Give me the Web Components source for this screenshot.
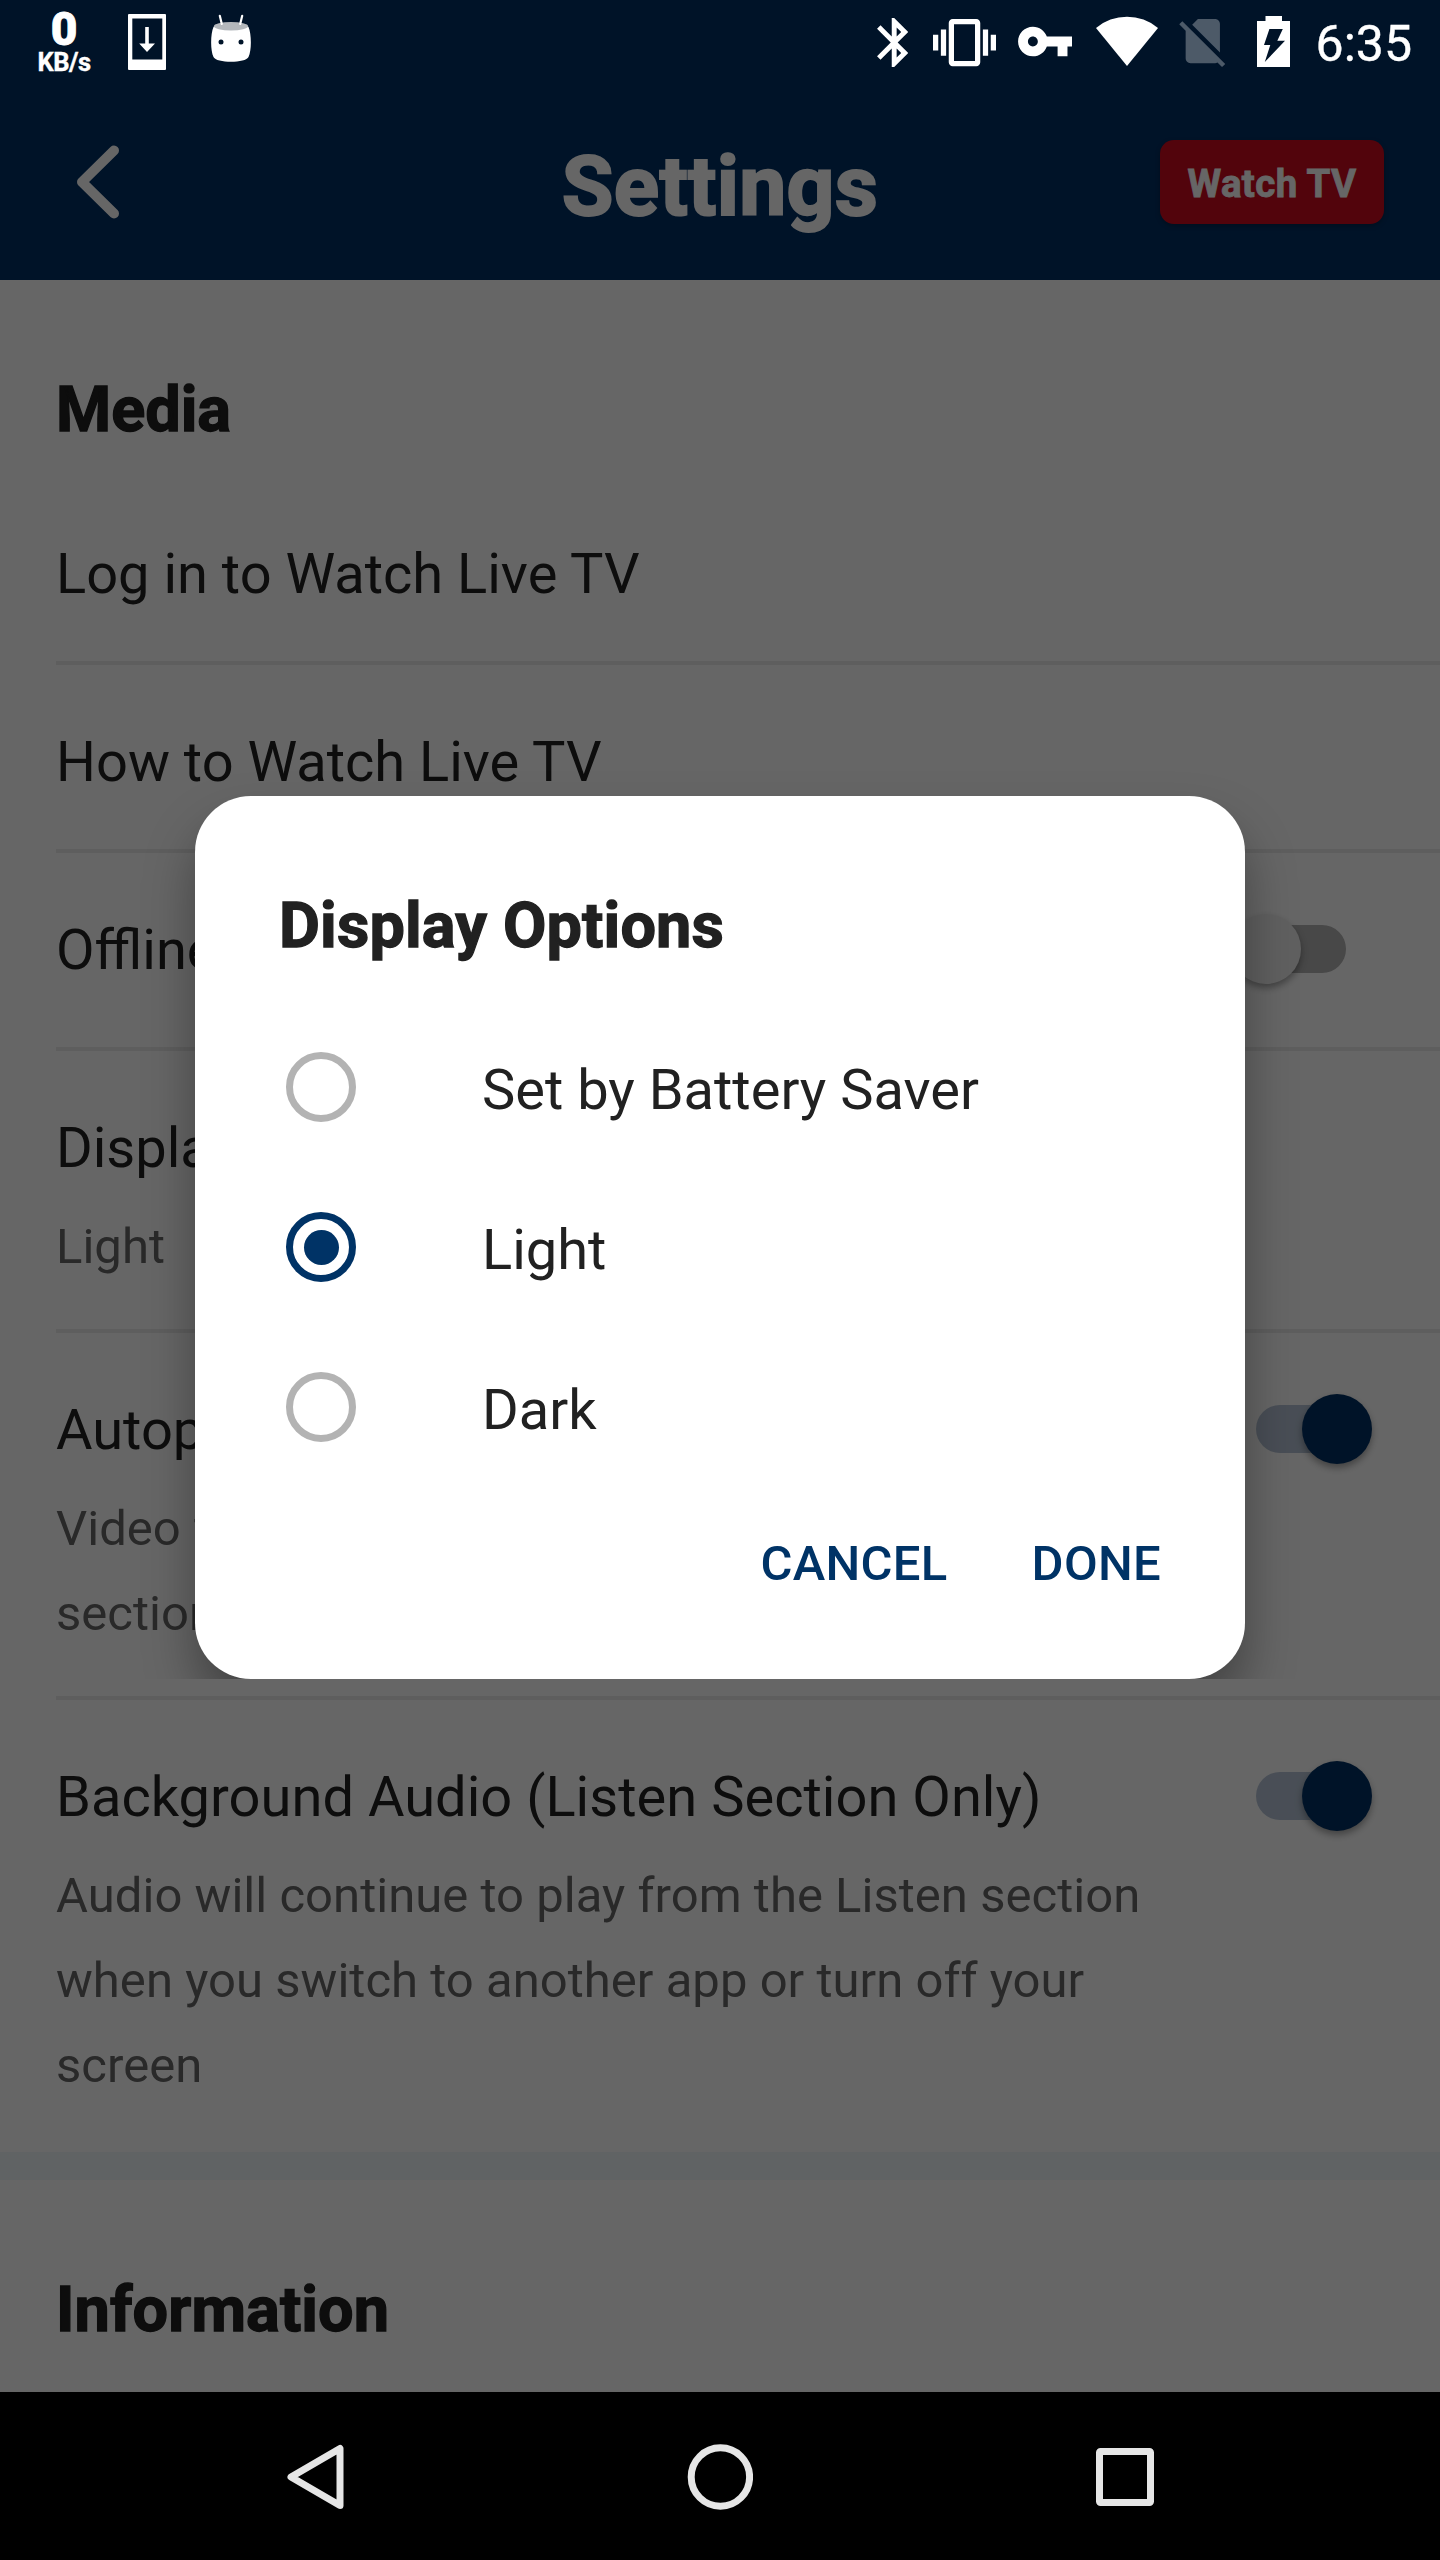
<!DOCTYPE html>
<html lang="en">
<head>
<meta charset="utf-8">
<title>Settings</title>
<style>
  html, body { margin: 0; padding: 0; background: #000; }
  body { width: 1440px; height: 2560px; overflow: hidden; font-family: Roboto, "Noto Sans", sans-serif; }
</style>
</head>
<body>
<phone-screen>
  <app-header slot="app" heading="Settings" action="Watch TV"></app-header>
  <settings-section slot="app" heading="Media">
    <settings-row label="Log in to Watch Live TV"></settings-row>
    <settings-row label="How to Watch Live TV"></settings-row>
    <settings-row label="Offline" class="tall"><toggle-switch slot="control"></toggle-switch></settings-row>
    <settings-row label="Display Options">Light</settings-row>
    <settings-row label="Autoplay">Video from<br>section<toggle-switch slot="control" checked></toggle-switch></settings-row>
    <settings-row label="Background Audio (Listen Section Only)" class="last">Audio will continue to play from the Listen section when you switch to another app or turn off your screen<toggle-switch slot="control" checked></toggle-switch></settings-row>
  </settings-section>
  <settings-section slot="app" heading="Information" class="next"></settings-section>
  <option-dialog slot="dialog" heading="Display Options">
    <radio-option>Set by Battery Saver</radio-option>
    <radio-option checked>Light</radio-option>
    <radio-option>Dark</radio-option>
    <text-button slot="actions">CANCEL</text-button>
    <text-button slot="actions">DONE</text-button>
  </option-dialog>
  <status-bar slot="status"></status-bar>
  <nav-bar slot="nav"></nav-bar>
</phone-screen>

<script>
const define = (name, render) => customElements.define(name, class extends HTMLElement {
  constructor() {
    super();
    this.attachShadow({ mode: 'open' });
  }
  connectedCallback() {
    this.shadowRoot.innerHTML = render(this);
  }
});

define('phone-screen', () => `
  <style>
    :host { display: flex; flex-direction: column; position: relative; width: 1440px; height: 2560px; overflow: hidden; background: #000; }
    .app { flex: 1; min-height: 0; overflow: hidden; background: #fff; }
    .scrim { position: absolute; top: 0; left: 0; right: 0; height: 2392px; box-sizing: border-box; padding-top: 83px;
      background: rgba(0,0,0,.6); display: flex; align-items: center; justify-content: center; }
    .status { position: absolute; top: 0; left: 0; right: 0; }
  </style>
  <div class="app"><slot name="app"></slot></div>
  <slot name="nav"></slot>
  <div class="scrim"><slot name="dialog"></slot></div>
  <div class="status"><slot name="status"></slot></div>`);

define('status-bar', () => `
  <style>
    :host { display: flex; height: 84px; color: #fff; }
    svg { display: block; height: 84px; flex: none; fill: #fff; }
    .left, .right { display: flex; }
    .left { padding-left: 34px; }
    .right { margin-left: auto; padding-right: 28px; }
    .rate { width: 60px; padding-top: 10px; display: flex; flex-direction: column; align-items: center; font-weight: 700; }
    .rate b { font-size: 46px; line-height: 39px; -webkit-text-stroke: .8px #fff; }
    .rate span { font-size: 25.500px; line-height: 26px; letter-spacing: -.5px; -webkit-text-stroke: .4px #fff; }
    time { font-size: 50px; line-height: 56px; padding-top: 15.500px; margin-left: 25.500px; -webkit-text-stroke: .4px #fff; }
  </style>
  <div class="left">
    <div class="rate"><b>0</b><span>KB/s</span></div>
    <svg style="margin-left:34px" width="38" viewBox="128 0 38 84">
      <path fill-rule="evenodd" d="M129 14h36a1 1 0 0 1 1 1v54a1 1 0 0 1-1 1h-36a1 1 0 0 1-1-1V15a1 1 0 0 1 1-1zM132.300 18.500v41h30v-41z"/>
      <path d="M145.200 27h3.600v16.500h6.200L147 52l-7.800-8.500h6z"/>
    </svg>
    <svg style="margin-left:45px" width="40" viewBox="211 0 40 84">
      <path d="M213.500 27C217 23 245 23 248.500 27 251.500 34 251.800 50 248.500 57 246 63.300 216 63.300 213.500 57 210.200 50 210.500 34 213.500 27z"/>
      <ellipse cx="231" cy="26.300" rx="17.200" ry="4.200" fill="#b4b8bc"/>
      <path d="M219.800 15.800l2 8.200M242.200 15.800l-2 8.200" stroke="#fff" stroke-width="2.200" stroke-linecap="round"/>
      <circle cx="221" cy="42" r="2.500" fill="#001429"/><circle cx="241" cy="42" r="2.500" fill="#001429"/>
    </svg>
  </div>
  <div class="right">
    <svg width="31" viewBox="876.500 0 31 84"><path transform="translate(864.300 13.100) scale(2.45)" d="M17.710 7.710L12 2h-1v7.590L6.410 5 5 6.410 10.590 12 5 17.590 6.410 19 11 14.410V22h1l5.710-5.710-4.300-4.290 4.300-4.290zM13 5.830l1.880 1.880L13 9.590V5.830zm1.880 10.460L13 18.170v-3.760l1.880 1.880z"/></svg>
    <svg style="margin-left:25.500px" width="63" viewBox="933 0 63 84"><path transform="translate(933 11.100) scale(2.625)" d="M0 15h2V9H0v6zm3 2h2V7H3v10zm19-8v6h2V9h-2zm-3 8h2V7h-2v10zM16.500 3h-9C6.670 3 6 3.670 6 4.500v15c0 .83.67 1.500 1.500 1.500h9c.83 0 1.500-.67 1.500-1.500v-15c0-.83-.67-1.500-1.500-1.500zM16 19H8V5h8v14z"/></svg>
    <svg style="margin-left:21.500px" width="54.500" viewBox="1017.500 0 54.500 84"><path transform="translate(1015.100 11.900) scale(2.47)" d="M12.650 10C11.830 7.670 9.610 6 7 6c-3.310 0-6 2.690-6 6s2.690 6 6 6c2.610 0 4.830-1.670 5.650-4H17v4h4v-4h2v-4H12.650zM7 14c-1.100 0-2-.9-2-2s.9-2 2-2 2 .9 2 2-.9 2-2 2z"/></svg>
    <svg style="margin-left:24px" width="62" viewBox="1096 0 62 84"><path d="M1127 66L1096 28A48.200 48.200 0 0 1 1158 28z"/></svg>
    <svg style="margin-left:20.500px" width="46.500" viewBox="1178.500 0 46.500 84"><path fill-opacity=".3" transform="translate(1172.900 11.700) scale(2.45)" d="M18.990 5c0-1.100-.89-2-1.990-2h-7L7.660 5.340 19 16.680 18.990 5zM3.650 3.880L2.380 5.150 5 7.770V19c0 1.100.9 2 2 2h10.010c.35 0 .67-.1.96-.26l1.880 1.880 1.270-1.270L3.650 3.880z"/></svg>
    <svg style="margin-left:32px" width="33" viewBox="1257 0 33 84"><path fill-rule="evenodd" d="M1265.500 16h16.500v5h8v46h-33V21h8.500zM1269.400 29l-5.400 16h6.300l-5.500 17 20.200-21.300h-7.700l5.500-11.700z"/></svg>
    <time>6:35</time>
  </div>`);

define('app-header', el => `
  <style>
    :host { display: block; height: 280px; box-sizing: border-box; padding-top: 84px; background: #003064; color: #fff; }
    header { height: 196px; display: grid; grid-template-columns: 1fr auto 1fr; align-items: center; }
    svg { display: block; margin: 0 0 0 77px; fill: none; stroke: #fff; stroke-width: 10; stroke-linecap: round; stroke-linejoin: round; }
    h1 { margin: 10px 0 0; font-size: 84px; line-height: 98px; font-weight: 700; letter-spacing: .25px; -webkit-text-stroke: 2px #fff; }
    button { justify-self: end; box-sizing: border-box; margin-right: 56px; width: 224px; height: 84px; padding: 3px 0 0; border: 0; border-radius: 14px;
      background: #ce0a1e; color: #fff; font: 700 38.500px/81px Roboto, sans-serif; letter-spacing: .35px; -webkit-text-stroke: .8px #fff;
      box-shadow: 0 2px 5px rgba(0,0,0,.25); }
  </style>
  <header>
    <svg width="42" height="74" viewBox="0 0 42 74"><path d="M37 5.500L5 37l32 31.500"/></svg>
    <h1>${el.getAttribute('heading')}</h1>
    <button>${el.getAttribute('action')}</button>
  </header>`);

define('settings-section', el => `
  <style>
    :host { display: block; }
    :host(.next) { border-top: 28px solid #f1f7fa; }
    h2 { margin: 0; padding: 87.500px 56px 25.500px; font-size: 63px; line-height: 84px; font-weight: 700; color: #212121; -webkit-text-stroke: 1.300px #212121; }
    :host(.next) h2 { letter-spacing: .1px; }
  </style>
  <h2>${el.getAttribute('heading')}</h2>
  <slot></slot>`);

define('settings-row', el => {
  const hasNote = [...el.childNodes].some(n => n.nodeType === 3 && n.data.trim());
  return `
  <style>
    :host { display: flex; align-items: flex-start; gap: 28px; margin-left: 56px; padding: 55px 68px 40px 0; border-bottom: 4px solid #ebebeb; }
    :host(.tall) { padding-bottom: 55px; }
    :host(.last) { border-bottom-color: transparent; }
    .text { flex: 1; min-width: 0; }
    .label { font-size: 56px; line-height: 84px; color: #212121; white-space: nowrap; }
    :host(.last) .label { letter-spacing: .03px; }
    .label.solo { margin-bottom: 5px; }
    :host(.tall) .label { margin-bottom: 0; }
    .note { margin-top: 14px; font-size: 49px; line-height: 85px; letter-spacing: .03px; color: #666; }
  </style>
  <div class="text">
    <div class="label ${hasNote ? '' : 'solo'}">${el.getAttribute('label')}</div>
    ${hasNote ? '<div class="note"><slot></slot></div>' : ''}
  </div>
  <slot name="control"></slot>`;
});

define('toggle-switch', () => `
  <style>
    :host { display: flex; align-items: center; flex: none; width: 141px; height: 84px; margin-top: -1px; }
    .track { display: flex; align-items: center; width: 90px; height: 48px; margin-left: 25px; border-radius: 24px; background: #b3b3b3; }
    .thumb { flex: none; width: 70px; height: 70px; margin-left: -25px; border-radius: 50%; background: #f1f1f1; box-shadow: 0 4px 7px rgba(0,0,0,.35); }
    :host([checked]) .track { background: #b6c4d6; }
    :host([checked]) .thumb { margin-left: 45.500px; background: #003064; }
  </style>
  <div class="track"><div class="thumb"></div></div>`);

define('option-dialog', el => `
  <style>
    :host { display: block; clip-path: inset(-60px -60px 0 -60px); }
    section { box-sizing: border-box; width: 1050px; height: 883px; padding: 87.500px 84px 0; border-radius: 56px; background: #fff;
      box-shadow: 0 30px 50px rgba(0,0,0,.35); }
    h2 { margin: 0 0 39.500px; font-size: 63px; line-height: 84px; font-weight: 700; letter-spacing: .15px; color: #212121; -webkit-text-stroke: 1.300px #212121; }
    .actions { display: flex; justify-content: flex-end; gap: 84px; margin-top: 35px; }
  </style>
  <section>
    <h2>${el.getAttribute('heading')}</h2>
    <slot></slot>
    <div class="actions"><slot name="actions"></slot></div>
  </section>`);

define('radio-option', el => `
  <style>
    :host { display: flex; align-items: center; gap: 126px; height: 160px; font-size: 56px; line-height: 66px; color: #212121; }
    .ring { flex: none; box-sizing: border-box; width: 70px; height: 70px; margin-left: 7px; border: 7px solid #b3b3b3; border-radius: 50%;
      display: flex; align-items: center; justify-content: center; }
    :host([checked]) .ring { border-color: #003366; }
    .dot { width: 35px; height: 35px; border-radius: 50%; background: #003366; }
    .label { padding-top: 6px; }
  </style>
  <div class="ring">${el.hasAttribute('checked') ? '<div class="dot"></div>' : ''}</div>
  <div class="label"><slot></slot></div>`);

define('text-button', () => `
  <style>
    :host { display: block; font-size: 49px; line-height: 84px; font-weight: 500; letter-spacing: .3px; color: #003366; }
  </style>
  <slot></slot>`);

define('nav-bar', () => `
  <style>
    :host { display: flex; justify-content: center; height: 168px; flex: none; background: #000; }
    div { width: 405px; padding-top: 1px; display: flex; align-items: center; justify-content: center; }
    svg { display: block; fill: none; stroke: #e6e6e6; stroke-width: 7; stroke-linejoin: round; }
  </style>
  <div><svg width="66" height="66" viewBox="0 0 66 66"><path d="M58 4.500v57L9 33z"/></svg></div>
  <div><svg width="66" height="66" viewBox="0 0 66 66"><circle cx="33.400" cy="33" r="29.200"/></svg></div>
  <div><svg width="66" height="66" viewBox="0 0 66 66"><rect x="7.500" y="7.500" width="51" height="51" rx="1"/></svg></div>`);
</script>
</body>
</html>
